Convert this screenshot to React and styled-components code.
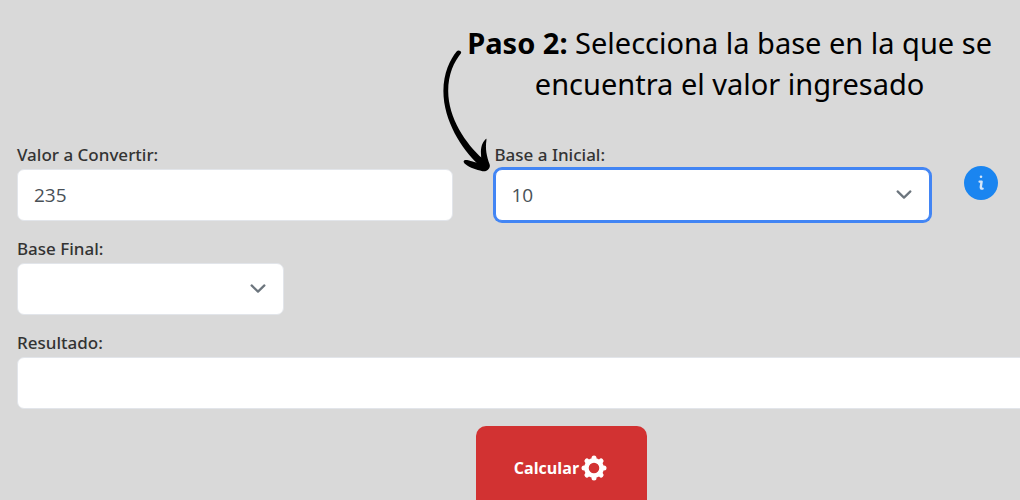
import React, { useState } from "react";
import styled, { createGlobalStyle, css } from "styled-components";

const GlobalStyle = createGlobalStyle`
  *, *::before, *::after { box-sizing: border-box; }
  body {
    margin: 0;
    background: #d9d9d9;
    color: #333;
    font-family: "Noto Sans", "Open Sans", sans-serif;
  }
`;

const Page = styled.main`
  height: 100vh;
  overflow: hidden;
  padding: 22px 0 0 17px;
`;

const Step = styled.header`
  position: relative;
  width: fit-content;
  margin: 0 28px 40px auto;
`;

const StepText = styled.p`
  margin: 0;
  color: #000;
  font-size: 29px;
  line-height: 41px;
  text-align: center;
`;

const StepArrow = styled.svg`
  position: absolute;
  top: 28px;
  left: -26px;
  z-index: 1;
`;

const Form = styled.form`
  display: flex;
  flex-direction: column;
  gap: 17px;
  width: calc(100% + 86px);
`;

const Row = styled.div`
  display: grid;
  grid-template-columns: 13fr 13fr 4fr;
  column-gap: 42px;
`;

const Field = styled.div`
  display: flex;
  flex-direction: column;
  width: ${({ $width }) => $width || "auto"};
`;

const Label = styled.label`
  padding-bottom: 3px;
  font-size: 17px;
  font-weight: 500;
  line-height: 22px;
`;

const control = css`
  width: 100%;
  height: 52px;
  padding: 0 16px;
  border: 1px solid #e2e5ea;
  border-radius: 7px;
  background: #fff;
  color: #495057;
  font: 400 19px/28px "Open Sans", "Noto Sans", sans-serif;
  outline: none;
`;

const Input = styled.input`
  ${control}
`;

const SelectBox = styled.div`
  position: relative;
`;

const Select = styled.select`
  ${control}
  display: block;
  appearance: none;
  ${({ $active }) =>
    $active &&
    css`
      border-color: #4285f4;
      box-shadow: 0 0 0 2px #4285f4;
    `}
`;

const Chevron = styled.svg`
  position: absolute;
  top: 20px;
  right: 18px;
  pointer-events: none;
`;

const InfoButton = styled.button`
  align-self: center;
  display: grid;
  place-items: center;
  width: 34px;
  height: 34px;
  margin-left: -8px;
  padding: 0;
  border: 0;
  border-radius: 50%;
  background: #1a85f0;
`;

const Submit = styled.button`
  display: flex;
  align-items: center;
  align-self: center;
  justify-content: center;
  gap: 2px;
  width: 171px;
  height: 84px;
  padding: 0 2px 0 0;
  border: 0;
  border-radius: 10px;
  background: #d23232;
  color: #fff;
  font: 700 16px/24px "Open Sans", "Noto Sans", sans-serif;
`;

const TEETH = [0, 45, 90, 135, 180, 225, 270, 315];

function Gear() {
  return (
    <svg width="26" height="26" viewBox="0 0 26 26" aria-hidden="true">
      <circle cx="13" cy="13" r="7.6" fill="none" stroke="#fff" strokeWidth="4.6" />
      {TEETH.map((angle) => (
        <path
          key={angle}
          d="M13 4.6V3"
          stroke="#fff"
          strokeWidth="5"
          strokeLinecap="round"
          transform={`rotate(${angle} 13 13)`}
        />
      ))}
    </svg>
  );
}

function Dropdown({ id, options, active, value, onChange }) {
  return (
    <SelectBox>
      <Select id={id} $active={active} value={value} onChange={(e) => onChange(e.target.value)}>
        {options.map((option) => (
          <option key={option} value={option}>{option}</option>
        ))}
      </Select>
      <Chevron width="16" height="12" viewBox="0 0 16 12" aria-hidden="true">
        <path d="M1.6 2.4L8 8.6L14.4 2.4" fill="none" stroke="#6c757d" strokeWidth="2.2" strokeLinecap="round" strokeLinejoin="round" />
      </Chevron>
    </SelectBox>
  );
}

export default function App() {
  const [value, setValue] = useState("235");
  const [from, setFrom] = useState("10");
  const [to, setTo] = useState("");

  return (
    <Page>
      <GlobalStyle />
      <Step>
        <StepText>
          <strong>Paso 2:</strong> Selecciona la base en la que se
          <br />
          encuentra el valor ingresado
        </StepText>
        <StepArrow width="52" height="126" viewBox="0 0 52 126" aria-hidden="true">
          <path d="M15.8 1.2C9 9.5 2.4 23 2.4 41C2.4 71 21 99 36.8 114L41.5 108.5C25 94 7.2 68 7.2 41C7.2 24 13 12 20 3.2C21 1.4 17.5-.4 15.8 1.2Z" />
          <path d="M44.8 89C41 92.5 39.6 98 40 104L40.2 108.5L36 112.5C30 111.5 27 109.5 24.2 110C21.8 110.6 22.5 112.5 24.2 114C29.5 118.2 35 119.6 41.5 121.2C46 122.1 50 118 48.6 114.2C45.6 106 44.2 99 45.4 90.5C45.6 89 45.4 88.5 44.8 89Z" />
        </StepArrow>
      </Step>

      <Form onSubmit={(e) => e.preventDefault()}>
        <Row>
          <Field>
            <Label htmlFor="value">Valor a Convertir:</Label>
            <Input id="value" value={value} onChange={(e) => setValue(e.target.value)} />
          </Field>
          <Field>
            <Label htmlFor="from">Base a Inicial:</Label>
            <Dropdown id="from" active options={["2", "8", "10", "16"]} value={from} onChange={setFrom} />
          </Field>
          <InfoButton type="button" aria-label="Información">
            <svg width="10" height="18" viewBox="0 0 10 18" aria-hidden="true">
              <circle cx="5" cy="2.8" r="1.3" fill="#d5e6f8" />
              <path d="M3.6 7.6H5.6L4.8 13.2Q4.8 15 6.6 14.6" fill="none" stroke="#d5e6f8" strokeWidth="2.4" strokeLinecap="round" strokeLinejoin="round" />
            </svg>
          </InfoButton>
        </Row>
        <Field $width="267px">
          <Label htmlFor="to">Base Final:</Label>
          <Dropdown id="to" options={["", "2", "8", "10", "16"]} value={to} onChange={setTo} />
        </Field>
        <Field>
          <Label htmlFor="result">Resultado:</Label>
          <Input id="result" readOnly value="" />
        </Field>
        <Submit type="submit">
          Calcular
          <Gear />
        </Submit>
      </Form>
    </Page>
  );
}
